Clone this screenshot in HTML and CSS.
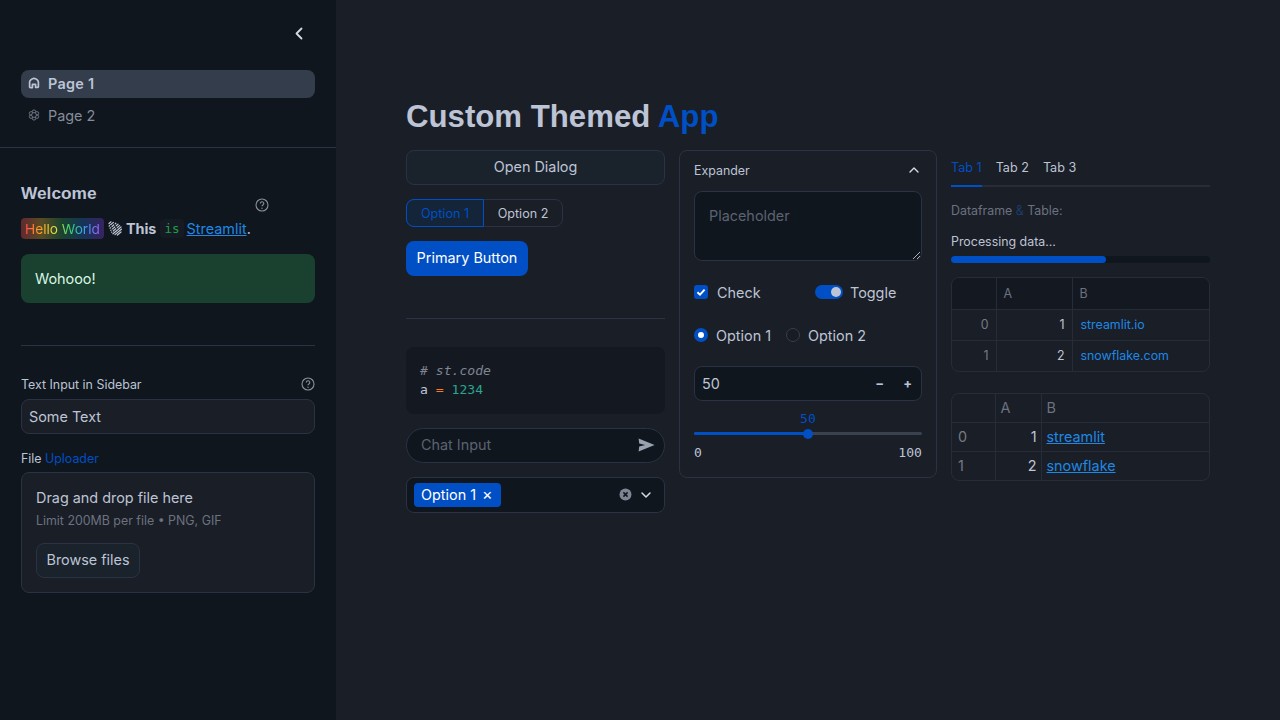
FILE: index.html
```html
<!DOCTYPE html>
<html lang="en">
<head>
  <meta charset="UTF-8" />
  <meta name="viewport" content="width=device-width, initial-scale=1.0" />
  <title>Custom Themed App</title>
  <link rel="stylesheet" href="styles.css">
</head>
<body>
  <div class="app">
    <aside class="sidebar">
      <div class="side-top">
        <svg class="collapse" width="20" height="20" viewBox="0 0 20 20"><path d="M12.5 4.5 7.5 9.5l5 5" fill="none" stroke="#d5dbe6" stroke-width="1.8" stroke-linecap="round" stroke-linejoin="round"/></svg>
      </div>
      <nav class="nav">
        <a class="nav-item active">
          <svg width="12" height="12" viewBox="0 0 12 12"><path d="M1.6 5.2C1.6 3.6 4 1.4 6 1.4s4.4 2.2 4.4 3.8v4.4a.8.8 0 0 1-.8.8H7.6V7.4H4.4v3.2H2.4a.8.8 0 0 1-.8-.8z" fill="none" stroke="#bdc4d5" stroke-width="1.7" stroke-linejoin="round"/></svg>
          Page 1
        </a>
        <a class="nav-item">
          <svg width="12" height="12" viewBox="0 0 12 12" fill="none" stroke="#6b7280" stroke-width="1">
            <circle cx="6" cy="2.7" r="1.8"/><circle cx="8.9" cy="4.4" r="1.8"/><circle cx="8.9" cy="7.6" r="1.8"/>
            <circle cx="6" cy="9.3" r="1.8"/><circle cx="3.1" cy="7.6" r="1.8"/><circle cx="3.1" cy="4.4" r="1.8"/>
            <circle cx="6" cy="6" r="2.4" fill="#0f161e"/>
          </svg>
          Page 2
        </a>
      </nav>
      <div class="side-body">
        <div class="welcome-row">
          <h3 class="welcome">Welcome</h3>
          <svg class="help help-welcome" width="14" height="14" viewBox="0 0 14 14"><use href="#help"/></svg>
        </div>
        <p class="hello">
          <span class="rainbow-bg"><span class="rainbow-text">Hello World</span></span>
          <svg class="wave" width="14" height="15" viewBox="0 0 14 15" fill="none" stroke="#c3c9d6" stroke-width="1.2" stroke-linecap="round">
            <path d="M1 2.5 3 .8M1.2 5 5.4 1.4M2 7.2 7.8 2.2M2.8 9.4 10 3.2M3.6 11.2 11.6 4.6M5 12.8 13 6M7 13.6 13.4 8.2M9.4 14l3.6-3"/>
            <path d="M2.6 4.4 4.6 11M6 2.4 9 8" stroke="#0f161e" stroke-width=".9"/>
          </svg>
          <b>This</b>
          <code class="inline-code">is</code>
          <a class="link">Streamlit</a>.
        </p>
        <div class="success">Wohooo!</div>
        <hr class="rule side-rule">
        <div class="label-row">
          <label>Text Input in Sidebar</label>
          <svg class="help" width="14" height="14" viewBox="0 0 14 14">
            <symbol id="help" viewBox="0 0 14 14">
              <circle cx="7" cy="7" r="6" fill="none" stroke="#8a909c" stroke-width="1.1"/>
              <path d="M5.3 5.5a1.75 1.75 0 1 1 2.6 1.5c-.6.35-.9.7-.9 1.3" fill="none" stroke="#8a909c" stroke-width="1.1"/>
              <circle cx="7" cy="10.2" r=".7" fill="#8a909c"/>
            </symbol>
            <use href="#help"/>
          </svg>
        </div>
        <div class="text-input">Some Text</div>
        <label class="file-label">File <span class="primary-text">Uploader</span></label>
        <div class="dropzone">
          <div class="drop-title">Drag and drop file here</div>
          <div class="drop-limit">Limit 200MB per file • PNG, GIF</div>
          <button class="browse">Browse files</button>
        </div>
      </div>
    </aside>

    <main class="main">
      <h1 class="title">Custom Themed <span class="primary-text">App</span></h1>
      <div class="columns">
        <section class="col">
          <button class="btn-wide">Open Dialog</button>
          <div class="segmented">
            <span class="seg seg-on">Option 1</span>
            <span class="seg">Option 2</span>
          </div>
          <button class="btn-primary">Primary Button</button>
          <hr class="rule main-rule">
          <pre class="code-block"><i class="c-comment"># st.code</i>
a <span class="c-op">=</span> <span class="c-num">1234</span></pre>
          <div class="chat">
            <span>Chat Input</span>
            <svg class="send" width="17" height="14" viewBox="0 0 17 14"><path d="M.6.6 16.6 7 .6 13.4l.6-5 6-1.4-6-1.4z" fill="#9aa1b0"/></svg>
          </div>
          <div class="multi">
            <span class="tag">Option 1 <span class="tag-x">×</span></span>
            <span class="multi-icons">
              <svg width="13" height="13" viewBox="0 0 13 13"><circle cx="6.5" cy="6.5" r="6" fill="#7f8592"/><path d="M4.4 4.4l4.2 4.2m0-4.2L4.4 8.6" stroke="#11161e" stroke-width="1.5"/></svg>
              <svg width="12" height="12" viewBox="0 0 12 12"><path d="M2 4l4 4 4-4" fill="none" stroke="#d5dbe6" stroke-width="1.5" stroke-linecap="round" stroke-linejoin="round"/></svg>
            </span>
          </div>
        </section>

        <section class="col card">
          <div class="exp-head">
            <span>Expander</span>
            <svg width="12" height="12" viewBox="0 0 12 12"><path d="M2 8l4-4 4 4" fill="none" stroke="#d5dbe6" stroke-width="1.4" stroke-linecap="round" stroke-linejoin="round"/></svg>
          </div>
          <div class="textarea">
            Placeholder
            <svg class="grip" width="7" height="7" viewBox="0 0 7 7"><path d="M0 7 7 0M4 7l3-3" stroke="#aab0bc" stroke-width="1"/></svg>
          </div>
          <div class="check-row">
            <span class="check-item">
              <span class="checkbox"><svg width="10" height="10" viewBox="0 0 10 10"><path d="M1.4 5.2 4 7.6l4.6-5" fill="none" stroke="#fff" stroke-width="1.9"/></svg></span>
              Check
            </span>
            <span class="toggle-item">
              <span class="toggle"><span class="knob"></span></span>
              Toggle
            </span>
          </div>
          <div class="radio-row">
            <span class="radio radio-on"></span><span class="radio-text">Option 1</span>
            <span class="radio"></span><span class="radio-text">Option 2</span>
          </div>
          <div class="number">
            <span>50</span>
            <span class="steppers"><b>−</b><b>+</b></span>
          </div>
          <div class="slider">
            <div class="slider-val">50</div>
            <div class="track"><span class="track-fill"></span><span class="thumb"></span></div>
            <div class="slider-ends"><span>0</span><span>100</span></div>
          </div>
        </section>

        <section class="col">
          <div class="tabs">
            <span class="tab tab-on">Tab 1</span>
            <span class="tab">Tab 2</span>
            <span class="tab">Tab 3</span>
          </div>
          <p class="df-caption">Dataframe <span class="amp">&amp;</span> Table:</p>
          <p class="progress-label">Processing data...</p>
          <div class="progress"><span class="progress-fill"></span></div>
          <div class="grid-wrap dataframe">
            <table>
              <tr class="head"><th></th><th>A</th><th>B</th></tr>
              <tr><td class="idx">0</td><td class="num">1</td><td class="url">streamlit.io</td></tr>
              <tr><td class="idx">1</td><td class="num">2</td><td class="url">snowflake.com</td></tr>
            </table>
          </div>
          <div class="grid-wrap static">
            <table>
              <tr class="head"><th></th><th>A</th><th>B</th></tr>
              <tr><td class="idx">0</td><td class="num">1</td><td><a class="link">streamlit</a></td></tr>
              <tr><td class="idx">1</td><td class="num">2</td><td><a class="link">snowflake</a></td></tr>
            </table>
          </div>
        </section>
      </div>
    </main>
  </div>
</body>
</html>
```

FILE: styles.css
```css
* {
  box-sizing: border-box;
}
html, body {
  margin: 0;
  height: 100%;
  overflow: hidden;
}
body {
  font-family: Inter, "Noto Sans", sans-serif;
  font-size: 14.4px;
  color: #bdc4d5;
  background: #1a1e26;
}
p, h1, h3, pre {
  margin: 0;
}
button {
  font: inherit;
  color: inherit;
}
.app {
  display: flex;
  height: 720px;
}
.primary-text {
  color: #004fc4;
}
.link {
  color: #1e88e5;
  text-decoration: underline;
}
.rule {
  border: none;
  border-top: 1px solid #2b3243;
  margin: 0;
}

/* sidebar */
.sidebar {
  width: 336px;
  flex: none;
  background: #0f161e;
}
.side-top {
  height: 70px;
  padding: 24px 27px 0 0;
  display: flex;
  justify-content: flex-end;
  align-items: flex-start;
}
.nav {
  display: flex;
  flex-direction: column;
  gap: 4px;
  padding: 0 21px 17px;
  border-bottom: 1px solid #2b3243;
}
.nav-item {
  height: 28px;
  display: flex;
  align-items: center;
  gap: 8px;
  padding: 0 0 2px 7px;
  border-radius: 8px;
  color: #868c99;
}
.nav-item.active {
  background: #343d4b;
  color: #bdc4d5;
  font-weight: 600;
  letter-spacing: .3px;
}
.side-body {
  padding: 0 21px;
}
.welcome-row {
  display: flex;
  align-items: flex-start;
  padding-top: 35px;
  height: 70px;
}
.welcome {
  font: bold 17.3px "Liberation Sans", Arial, sans-serif;
  line-height: 20px;
}
.help-welcome {
  margin-left: 158px;
  margin-top: 15px;
}
.hello {
  height: 21px;
  display: flex;
  align-items: center;
  gap: 4px;
  white-space: nowrap;
}
.hello .link {
  margin-left: -1px;
  margin-right: -4px;
}
.rainbow-bg {
  height: 21px;
  padding: 0 4px;
  display: flex;
  align-items: center;
  border-radius: 4px;
  font-size: 13.7px;
  background: linear-gradient(to right, rgba(255, 75, 75, .35), rgba(255, 200, 50, .3), rgba(60, 200, 100, .25), rgba(40, 120, 220, .3), rgba(130, 60, 220, .35));
}
.rainbow-text {
  background: linear-gradient(to right, #ff4b4b, #ffa421, #e6e04a, #3dd56d, #3d9df3, #9a5dff);
  -webkit-background-clip: text;
  background-clip: text;
  color: transparent;
}
.inline-code {
  font: 12.6px "DejaVu Sans Mono", monospace;
  color: #1f9d4d;
  background: #161b23;
  padding: 2px 4px;
  border-radius: 4px;
}
.success {
  margin-top: 15px;
  height: 49px;
  padding: 0 14px;
  display: flex;
  align-items: center;
  border-radius: 8px;
  background: #1a4030;
  color: #d8f7e3;
}
.side-rule {
  margin-top: 42px;
}
.label-row {
  margin-top: 30px;
  height: 16px;
  display: flex;
  justify-content: space-between;
  align-items: center;
}
label {
  font-size: 12.4px;
}
.text-input {
  margin-top: 7px;
  height: 35px;
  padding: 0 7px;
  display: flex;
  align-items: center;
  background: #1a1e26;
  border: 1px solid #2b3243;
  border-radius: 8px;
}
.file-label {
  display: block;
  margin-top: 17px;
  line-height: 16px;
}
.dropzone {
  margin-top: 5px;
  height: 121px;
  padding: 16px 14px;
  background: #1a1e26;
  border: 1px solid #2b3243;
  border-radius: 8px;
}
.drop-title {
  line-height: 18px;
}
.drop-limit {
  margin-top: 6px;
  font-size: 12.4px;
  line-height: 16px;
  color: #6b7280;
}
.browse {
  margin-top: 14px;
  width: 104px;
  height: 35px;
  padding: 0 0 2px;
  background: #1a222c;
  border: 1px solid #2b3243;
  border-radius: 8px;
}

/* main */
.main {
  flex: 1;
  padding: 100px 0 0 70px;
}
.title {
  font: bold 31.2px/34px "Liberation Sans", Arial, sans-serif;
  height: 50px;
}
.columns {
  display: flex;
  align-items: flex-start;
  gap: 14px;
  width: 804px;
}
.col {
  width: 259px;
  flex: none;
}
.btn-wide {
  display: block;
  width: 100%;
  height: 35px;
  padding: 0 0 2px;
  background: #1a222c;
  border: 1px solid #2b3243;
  border-radius: 8px;
}
.segmented {
  margin-top: 14px;
  display: inline-flex;
  height: 28px;
  border: 1px solid #2b3243;
  border-radius: 8px;
  font-size: 12.6px;
  vertical-align: top;
}
.seg {
  width: 78px;
  display: flex;
  align-items: center;
  justify-content: center;
}
.seg-on {
  width: 78px;
  margin: -1px 0 -1px -1px;
  color: #004fc4;
  background: #14253a;
  border: 1px solid #004fc4;
  border-radius: 8px 0 0 8px;
}
.btn-primary {
  display: block;
  margin-top: 14px;
  width: 122px;
  height: 35px;
  padding: 0 0 2px;
  background: #004fc4;
  color: #fff;
  border: none;
  border-radius: 8px;
}
.main-rule {
  margin-top: 42px;
}
.code-block {
  margin-top: 28px;
  height: 67px;
  padding: 14px 14px;
  background: #141921;
  border-radius: 8px;
  font: 13.1px/19px "DejaVu Sans Mono", monospace;
}
.c-comment {
  color: #7f8592;
}
.c-op {
  color: #ff7a1a;
}
.c-num {
  color: #2aa58f;
}
.chat {
  margin-top: 14px;
  height: 35px;
  padding: 0 9px 2px 14px;
  display: flex;
  justify-content: space-between;
  align-items: center;
  background: #0f161e;
  border: 1px solid #2b3243;
  border-radius: 18px;
  color: #5c6370;
}
.multi {
  margin-top: 14px;
  height: 36px;
  padding: 0 12px 1px 7px;
  display: flex;
  justify-content: space-between;
  align-items: center;
  background: #0f161e;
  border: 1px solid #2b3243;
  border-radius: 8px;
}
.tag {
  height: 24px;
  width: 87px;
  padding: 0 0 1px 7px;
  display: flex;
  align-items: center;
  gap: 6px;
  background: #004fc4;
  color: #fff;
  border-radius: 4px;
}
.tag-x {
  font-size: 16px;
  line-height: 18px;
}
.multi-icons {
  display: flex;
  align-items: center;
  gap: 8px;
}
.card {
  width: 258px;
  height: 328px;
  padding: 0 14px;
  border: 1px solid #2b3243;
  border-radius: 8px;
}
.exp-head {
  height: 40px;
  display: flex;
  justify-content: space-between;
  align-items: center;
  font-size: 12.4px;
  padding: 0 2px 2px 0;
}
.textarea {
  position: relative;
  height: 70px;
  padding: 15px 14px;
  background: #0f161e;
  border: 1px solid #2b3243;
  border-radius: 8px;
  color: #5c6370;
  line-height: 18px;
}
.grip {
  position: absolute;
  right: 1px;
  bottom: 1px;
}
.check-row {
  margin-top: 22px;
  height: 18px;
  display: flex;
  align-items: center;
}
.check-item {
  width: 121px;
  display: flex;
  align-items: center;
  gap: 9px;
}
.checkbox {
  width: 14px;
  height: 14px;
  display: flex;
  align-items: center;
  justify-content: center;
  background: #004fc4;
  border-radius: 3px;
}
.toggle-item {
  display: flex;
  align-items: center;
  gap: 7px;
}
.toggle {
  width: 28px;
  height: 14px;
  padding: 2px 2px 2px 16px;
  background: #004fc4;
  border-radius: 7px;
}
.knob {
  display: block;
  width: 10px;
  height: 10px;
  background: #bdc4d5;
  border-radius: 50%;
}
.radio-row {
  margin-top: 25px;
  height: 18px;
  display: flex;
  align-items: center;
}
.radio {
  width: 14px;
  height: 14px;
  flex: none;
  border-radius: 50%;
  background: #181c24;
  border: 1px solid #373e4b;
}
.radio-on {
  background: #fff;
  border: 4px solid #004fc4;
}
.radio-text {
  margin: 0 13px 0 8px;
}
.radio-on + .radio-text {
  margin-right: 15px;
}
.number {
  margin-top: 22px;
  height: 35px;
  padding: 0 7px;
  display: flex;
  justify-content: space-between;
  align-items: center;
  background: #0f161e;
  border: 1px solid #2b3243;
  border-radius: 8px;
}
.steppers {
  display: flex;
  gap: 19px;
  padding: 0 2px 2px 0;
  font-size: 13px;
}
.slider {
  font: 13.1px "DejaVu Sans Mono", monospace;
}
.slider-val {
  margin-top: 10px;
  height: 16px;
  line-height: 16px;
  text-align: center;
  color: #004fc4;
}
.track {
  position: relative;
  margin-top: 5px;
  height: 3px;
  background: #3a424f;
  border-radius: 2px;
}
.track-fill {
  display: block;
  width: 50%;
  height: 100%;
  background: #004fc4;
  border-radius: 2px;
}
.thumb {
  position: absolute;
  left: 109px;
  top: -3px;
  width: 10px;
  height: 10px;
  background: #004fc4;
  border-radius: 50%;
}
.slider-ends {
  margin-top: 10px;
  display: flex;
  justify-content: space-between;
  line-height: 16px;
}
.tabs {
  display: flex;
  gap: 14px;
  height: 37px;
  border-bottom: 2px solid #262c38;
  font-size: 12.6px;
  line-height: 35px;
}
.tab-on {
  height: 37px;
  color: #004fc4;
  border-bottom: 2px solid #004fc4;
}
.df-caption {
  margin-top: 16px;
  font-size: 12.4px;
  line-height: 16px;
  color: #6b7280;
}
.amp {
  color: #1c3a6b;
}
.progress-label {
  margin-top: 15px;
  font-size: 12.4px;
  line-height: 16px;
}
.progress {
  margin-top: 6px;
  height: 7px;
  background: #0f161e;
  border-radius: 4px;
}
.progress-fill {
  display: block;
  width: 60%;
  height: 100%;
  background: #004fc4;
  border-radius: 4px;
}
.grid-wrap {
  border: 1px solid #262c38;
  border-radius: 8px;
  overflow: hidden;
}
table {
  width: 100%;
  border-collapse: collapse;
  table-layout: fixed;
}
th, td {
  padding: 0 7px;
  font-weight: 400;
  text-align: left;
  border-left: 1px solid #262c38;
  border-top: 1px solid #262c38;
}
th:first-child, td:first-child {
  border-left: none;
}
tr:first-child th {
  border-top: none;
}
th {
  color: #6b7280;
}
.idx {
  color: #737a87;
}
.num {
  text-align: right;
}
.dataframe {
  margin-top: 14px;
  height: 95px;
}
.dataframe table {
  font-size: 12.4px;
}
.dataframe th:nth-child(1), .dataframe td:nth-child(1) {
  width: 44px;
}
.dataframe th:nth-child(2), .dataframe td:nth-child(2) {
  width: 76px;
}
.dataframe tr {
  height: 31px;
}
.dataframe .idx {
  text-align: right;
}
.dataframe .head {
  background: #141921;
}
.url {
  color: #1e88e5;
  padding-left: 8px;
}
.static {
  margin-top: 21px;
  height: 88px;
}
.static table {
  font-size: 14.4px;
}
.static th, .static td {
  padding: 0 5px;
}
.static td:first-child {
  padding-left: 6px;
}
.static .num {
  padding-right: 4px;
}
.static th:nth-child(1), .static td:nth-child(1) {
  width: 43px;
}
.static th:nth-child(2), .static td:nth-child(2) {
  width: 46px;
}
.static tr {
  height: 29px;
}
.static .head {
  height: 28px;
}
```
